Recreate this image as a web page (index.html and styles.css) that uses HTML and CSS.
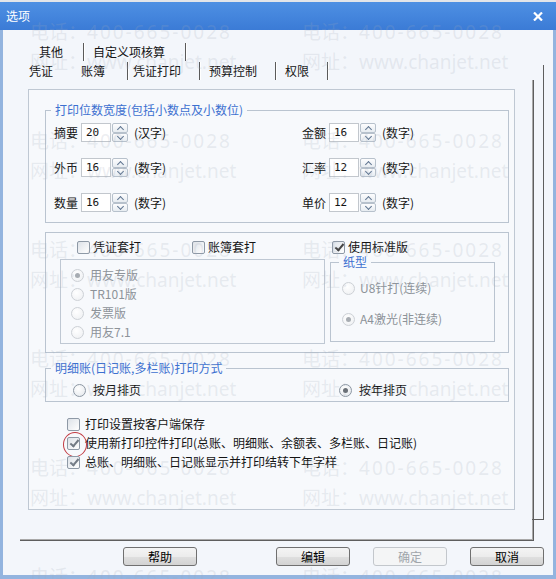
FILE: index.html
```html
<!DOCTYPE html>
<html lang="zh-CN">
<head>
<meta charset="utf-8">
<title>选项</title>
<link rel="stylesheet" href="styles.css">
</head>
<body>
<div class="window">
  <header class="titlebar">
    <span class="title">选项</span>
    <svg class="close" width="10" height="9" viewBox="0 0 10 9"><path d="M1 0.5 L9 8.5 M9 0.5 L1 8.5" stroke="#fff" stroke-width="2.2"/></svg>
  </header>

  <div class="client">
    <div class="tabctl">
      <div class="tabrow row-back">
        <span class="tab">其他</span>
        <span class="tab">自定义项核算</span>
      </div>
      <div class="tabrow row-front">
        <span class="tab before-sel">凭证</span>
        <span class="tab sel">账簿</span>
        <span class="tab">凭证打印</span>
        <span class="tab">预算控制</span>
        <span class="tab">权限</span>
      </div>

      <div class="pane">
        <div class="sheet">
          <fieldset class="group widths">
            <legend>打印位数宽度(包括小数点及小数位)</legend>
            <div class="field-grid">
              <div class="field"><span class="lbl">摘要</span><span class="num">20</span><span class="spin"><span class="up"></span><span class="down"></span></span><span class="unit">(汉字)</span></div>
              <div class="field"><span class="lbl">金额</span><span class="num">16</span><span class="spin"><span class="up"></span><span class="down"></span></span><span class="unit">(数字)</span></div>
              <div class="field"><span class="lbl">外币</span><span class="num">16</span><span class="spin"><span class="up"></span><span class="down"></span></span><span class="unit">(数字)</span></div>
              <div class="field"><span class="lbl">汇率</span><span class="num">12</span><span class="spin"><span class="up"></span><span class="down"></span></span><span class="unit">(数字)</span></div>
              <div class="field"><span class="lbl">数量</span><span class="num">16</span><span class="spin"><span class="up"></span><span class="down"></span></span><span class="unit">(数字)</span></div>
              <div class="field"><span class="lbl">单价</span><span class="num">12</span><span class="spin"><span class="up"></span><span class="down"></span></span><span class="unit">(数字)</span></div>
            </div>
          </fieldset>

          <fieldset class="group style">
            <div class="style-cols">
              <div class="col-left">
                <div class="cbrow">
                  <label class="chk first"><span class="cb"></span><span>凭证套打</span></label>
                  <label class="chk"><span class="cb"></span><span>账簿套打</span></label>
                </div>
                <div class="radiobox">
                  <div class="opt dis"><span class="rb dis on"></span><span>用友专版</span></div>
                  <div class="opt dis"><span class="rb dis"></span><span>TR101版</span></div>
                  <div class="opt dis"><span class="rb dis"></span><span>发票版</span></div>
                  <div class="opt dis"><span class="rb dis"></span><span>用友7.1</span></div>
                </div>
              </div>
              <div class="col-right">
                <div class="cbrow std">
                  <label class="chk"><span class="cb on"></span><span>使用标准版</span></label>
                </div>
                <fieldset class="group paper">
                  <legend>纸型</legend>
                  <div class="opt dis"><span class="rb dis"></span><span>U8针打(连续)</span></div>
                  <div class="opt dis gap"><span class="rb dis on"></span><span>A4激光(非连续)</span></div>
                </fieldset>
              </div>
            </div>
          </fieldset>

          <fieldset class="group detail">
            <legend>明细账(日记账,多栏账)打印方式</legend>
            <div class="detail-grid">
              <div class="opt"><span class="rb"></span><span>按月排页</span></div>
              <div class="opt"><span class="rb on"></span><span>按年排页</span></div>
            </div>
          </fieldset>

          <div class="checks">
            <label class="chk"><span class="cb"></span><span>打印设置按客户端保存</span></label>
            <label class="chk"><span class="cb on soft"><span class="ring"></span></span><span>使用新打印控件打印(总账、明细账、余额表、多栏账、日记账)</span></label>
            <label class="chk"><span class="cb on soft"></span><span>总账、明细账、日记账显示并打印结转下年字样</span></label>
          </div>
        </div>
      </div>
    </div>

    <div class="buttons">
      <button class="btn help" type="button">帮助</button>
      <button class="btn" type="button">编辑</button>
      <button class="btn" type="button" disabled>确定</button>
      <button class="btn" type="button">取消</button>
    </div>
  </div>

  <div class="watermark" aria-hidden="true">
    <div class="wm"><span>电话：<span class="digits">400-665-0028</span></span><span>网址：www.chanjet.net</span></div>
    <div class="wm"><span>电话：<span class="digits">400-665-0028</span></span><span>网址：www.chanjet.net</span></div>
    <div class="wm"><span>电话：<span class="digits">400-665-0028</span></span><span>网址：www.chanjet.net</span></div>
    <div class="wm"><span>电话：<span class="digits">400-665-0028</span></span><span>网址：www.chanjet.net</span></div>
    <div class="wm"><span>电话：<span class="digits">400-665-0028</span></span><span>网址：www.chanjet.net</span></div>
    <div class="wm"><span>电话：<span class="digits">400-665-0028</span></span><span>网址：www.chanjet.net</span></div>
    <div class="wm"><span>电话：<span class="digits">400-665-0028</span></span><span>网址：www.chanjet.net</span></div>
    <div class="wm"><span>电话：<span class="digits">400-665-0028</span></span><span>网址：www.chanjet.net</span></div>
    <div class="wm"><span>电话：<span class="digits">400-665-0028</span></span><span>网址：www.chanjet.net</span></div>
    <div class="wm"><span>电话：<span class="digits">400-665-0028</span></span><span>网址：www.chanjet.net</span></div>
    <div class="wm"><span>电话：<span class="digits">400-665-0028</span></span><span>网址：www.chanjet.net</span></div>
    <div class="wm"><span>电话：<span class="digits">400-665-0028</span></span><span>网址：www.chanjet.net</span></div>
  </div>
</div>
</body>
</html>
```

FILE: styles.css
```css
* { box-sizing: border-box; }

html, body { margin: 0; padding: 0; }

body {
  width: 556px;
  height: 579px;
  overflow: hidden;
  font: 12px/16px "Noto Sans CJK SC", "Noto Sans", sans-serif;
  color: #141414;
  background: #f3f6fb;
}

.window {
  position: relative;
  width: 556px;
  height: 579px;
  display: flex;
  flex-direction: column;
}

/* ---------- title bar ---------- */
.titlebar {
  flex: none;
  height: 30px;
  border-top: 2px solid #e2e5e9;
  background: linear-gradient(#4e90e3, #3b7bd6);
  display: flex;
  align-items: center;
  padding-left: 6px;
  color: #fff;
}
.title { flex: 1; font-size: 12px; line-height: 16px; }
.close { margin-right: 13px; }

/* ---------- client area ---------- */
.client {
  flex: 1;
  border: 3px solid #93b4df;
  border-top: 0;
  border-bottom-width: 4px;
  background: #f3f6fb;
  padding-top: 13px;
}

/* ---------- tab control ---------- */
.tabctl { margin-left: 17px; }

.tabrow { display: flex; height: 18px; line-height: 17px; }
.row-back { padding-left: 10px; }
.row-front { margin-top: 1px; }

.tab {
  padding: 0 18px 0 9px;
  border-right: 1px solid #5a5a5a;
  box-shadow: 1px 0 0 #ffffff;
  white-space: nowrap;
}
.row-back .tab { padding-right: 20px; }
.tab.before-sel { border-right-color: transparent; box-shadow: none; }
.tab.sel { padding-right: 22px; margin-right: -4px; }

.pane {
  position: relative;
  width: 514px;
  height: 461px;
  border-right: 1px solid #5e5e5e;
  border-bottom: 1px solid #5e5e5e;
  box-shadow: inset -1px -1px 0 #a9a9a9;
  padding: 9px 0 0 8px;
}
/* edge of the page of the back tab row */
.pane::before {
  content: "";
  position: absolute;
  top: -15px;
  right: -11px;
  bottom: 20px;
  width: 11px;
  border-right: 1px solid #5e5e5e;
  border-bottom: 1px solid #5e5e5e;
}

.sheet {
  width: 487px;
  height: 421px;
  border: 1px solid #bfc8d3;
  background: #f7f9fc;
}

/* ---------- group boxes ---------- */
fieldset.group {
  margin: 0;
  min-inline-size: 0;
  border: 1px solid #bac4d0;
}
fieldset.group legend {
  font-size: 12px;
  line-height: 14px;
  color: #3c70d0;
  padding: 0 4px;
}

.widths {
  width: 464px;
  margin: 13px 0 0 16px !important;
  padding: 6px 0 10px 8px;
}
.widths legend { margin-left: -3px; }

.field-grid {
  display: grid;
  grid-template-columns: 248px auto;
  row-gap: 16px;
}
.field { display: flex; align-items: center; height: 19px; }
.lbl { width: 24px; margin-right: 3px; white-space: nowrap; }
.num {
  width: 30px;
  height: 19px;
  border: 1px solid #c2c7cd;
  background: #fff;
  padding-left: 4px;
  line-height: 17px;
  font-family: "DejaVu Sans Mono", "Liberation Mono", monospace;
  font-size: 11px;
}
.spin {
  margin-left: 1px;
  width: 16px;
  height: 19px;
  display: flex;
  flex-direction: column;
}
.spin .up, .spin .down {
  position: relative;
  border: 1px solid #b7c1cc;
  border-radius: 2px;
  background: linear-gradient(#fdfdfe, #e7ecf1);
}
.spin .up { height: 10px; }
.spin .down { height: 9px; }
.spin .up::after, .spin .down::after {
  content: "";
  position: absolute;
  left: 5px;
  width: 4px;
  height: 4px;
  border-top: 1px solid #5f7590;
  border-left: 1px solid #5f7590;
}
.spin .up::after { top: 3px; transform: rotate(45deg); }
.spin .down::after { top: 0px; transform: rotate(225deg); }
.unit { margin-left: 6px; white-space: nowrap; }

.style {
  width: 464px;
  margin: 9px 0 0 16px !important;
  padding: 6px 0 8px 14px;
}
.style-cols { display: flex; }
.col-left { width: 265px; }
.col-right { width: 165px; margin-left: 5px; }

.cbrow { display: flex; height: 16px; align-items: center; padding-left: 17px; }
.cbrow.std { padding-left: 2px; }
.chk { display: flex; align-items: center; gap: 3px; white-space: nowrap; }
.chk.first { width: 115px; }

.radiobox {
  margin-top: 4px;
  border: 1px solid #bfc8d3;
  padding: 6px 0 2px 10px;
  display: flex;
  flex-direction: column;
  gap: 1px;
}
.opt { display: flex; align-items: center; height: 18px; gap: 6px; white-space: nowrap; }
.opt.dis { color: #8d9399; }

.paper {
  width: 165px;
  padding: 10px 0 13px 11px;
}
.paper legend { margin-left: -3px; padding: 0 3px; }
.paper .opt { gap: 5px; }
.paper .opt.gap { margin-top: 13px; }

.detail {
  width: 464px;
  margin: 8px 0 0 16px !important;
  padding: 6px 0 2px 27px;
}
.detail legend { margin-left: -22px; }
.detail-grid { display: grid; grid-template-columns: 266px auto; }
.detail .opt { gap: 7px; }

.checks {
  margin: 13px 0 0 38px;
  display: flex;
  flex-direction: column;
  gap: 1px;
}
.checks .chk { height: 18px; gap: 5px; }

/* ---------- check boxes & radio buttons ---------- */
.cb {
  position: relative;
  flex: none;
  width: 13px;
  height: 13px;
  border: 1px solid #8e99a6;
  border-radius: 2px;
  background: linear-gradient(135deg, #dde2e8, #ffffff);
}
.cb.on::after {
  content: "";
  position: absolute;
  left: 3.5px;
  top: 0.5px;
  width: 3px;
  height: 7px;
  border: solid #454545;
  border-width: 0 2px 2px 0;
  transform: rotate(40deg);
}
.cb.soft::after { border-color: #727a84; }

.ring {
  position: absolute;
  left: -5px;
  top: -6px;
  width: 24px;
  height: 25px;
  border: 1px solid #c23a42;
  border-radius: 50%;
}

.rb {
  position: relative;
  flex: none;
  width: 13px;
  height: 13px;
  border-radius: 50%;
  border: 1px solid #8d97a3;
  background: radial-gradient(circle at 40% 35%, #ffffff, #e2e6eb);
}
.rb.dis { border-color: #cdd1d6; background: radial-gradient(circle at 40% 35%, #ffffff, #eceef1); }
.rb.on::after {
  content: "";
  position: absolute;
  left: 3px;
  top: 3px;
  width: 5px;
  height: 5px;
  border-radius: 50%;
  background: #6a7077;
}
.rb.dis.on::after { background: #a7acb2; }

/* ---------- dialog buttons ---------- */
.buttons {
  display: flex;
  gap: 23px;
  margin: 6px 0 0 120px;
}
.btn {
  width: 74px;
  height: 19px;
  padding: 0;
  border: 1px solid #707070;
  border-radius: 3px;
  background: linear-gradient(#f4f4f4, #ececec 50%, #dfdfdf 51%, #d3d3d3);
  font: 12px/16px "Noto Sans CJK SC", sans-serif;
  color: #000;
}
.btn.help { margin-right: 56px; }
.btn:disabled {
  border-color: #c3c7cc;
  background: #f4f5f6;
  color: #a0a5ab;
}

/* ---------- watermark ---------- */
.watermark {
  position: absolute;
  inset: 0;
  pointer-events: none;
  overflow: hidden;
  padding: 17px 0 0 30px;
  display: grid;
  grid-template-columns: 272px 240px;
  grid-auto-rows: 60px;
  row-gap: 49px;
  font: 19px/30px "Noto Sans", "Noto Sans CJK SC", sans-serif;
  color: rgba(160, 170, 186, 0.2);
  white-space: nowrap;
}
.wm { display: flex; flex-direction: column; }
.wm .digits { letter-spacing: 2px; }
```
